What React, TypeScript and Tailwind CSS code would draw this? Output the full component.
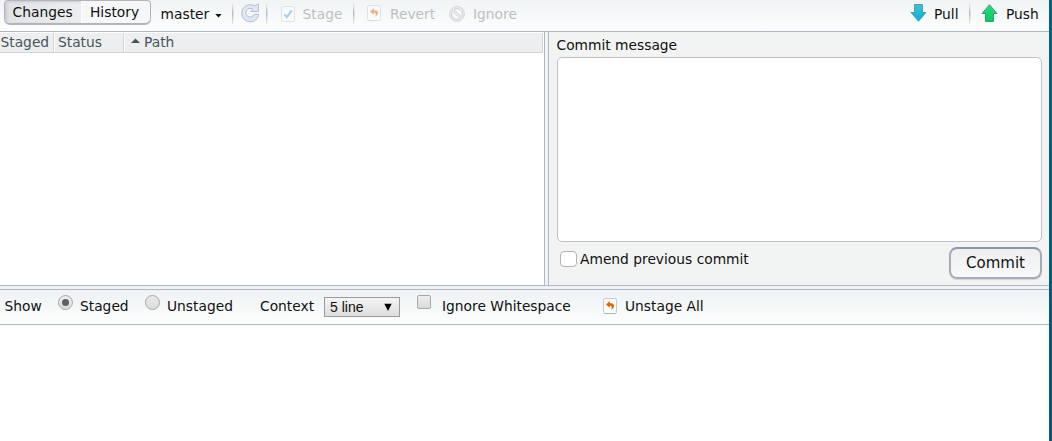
import React from "react";

function Label({ w, className = "", children }: { w: string; className?: string; children: React.ReactNode }) {
  return <span className={`block shrink-0 whitespace-nowrap ${w} ${className}`}>{children}</span>;
}

function Divider({ className = "" }: { className?: string }) {
  return (
    <span className={`flex h-[21px] w-[2px] shrink-0 ${className}`}>
      <span className="w-px bg-linear-to-b from-[#eef1f2] via-[#b5b8ba] to-[#e8eaeb]" />
      <span className="w-px bg-linear-to-b from-[#f2f4f5] via-[#dfe1e2] to-[#f6f7f7]" />
    </span>
  );
}

function RefreshIcon({ className = "" }: { className?: string }) {
  return (
    <svg width="20" height="20" viewBox="0 0 20 20" className={`shrink-0 ${className}`}>
      <path
        d="M15.1 3.1A8.6 8.6 0 1 0 18.6 12.4V11.4H14A4.3 4.3 0 1 1 12.8 6.4L10.9 8.4H18.3V1.2H16.9Z"
        fill="#dfe8f8"
        stroke="#b4bdcb"
        strokeWidth="1"
        strokeLinejoin="round"
      />
    </svg>
  );
}

function PageFrame({ children, bottom = "#a9b4be" }: { children: React.ReactNode; bottom?: string }) {
  return (
    <>
      <rect x="0.5" y="0.5" width="13" height="15" rx="1.5" fill="#fff" stroke="#c5cad2" />
      <path d="M1.5 15.5H12.5" stroke={bottom} />
      {children}
    </>
  );
}

function StageIcon({ className = "" }: { className?: string }) {
  return (
    <svg width="14" height="16" viewBox="0 0 14 16" className={`shrink-0 opacity-45 ${className}`}>
      <PageFrame bottom="#c5cad2">
        <path d="M3.3 8.4L5.9 11.2L10.5 4.4" fill="none" stroke="#4b93f0" strokeWidth="2" />
      </PageFrame>
    </svg>
  );
}

function UndoIcon({ className = "" }: { className?: string }) {
  return (
    <svg width="14" height="16" viewBox="0 0 14 16" className={`shrink-0 ${className}`}>
      <PageFrame>
        <path d="M3 6.4L6.7 3V5.2H8C10.2 5.2 11.2 6.6 11 8.3C10.8 10 9.7 11 8 11.8C8.8 10.5 9.3 8 7.8 7.7H6.7V9.8Z" fill="#df6500" />
      </PageFrame>
    </svg>
  );
}

function IgnoreIcon({ className = "" }: { className?: string }) {
  return (
    <svg width="16" height="16" viewBox="0 0 16 16" className={`shrink-0 ${className}`}>
      <circle cx="8" cy="8" r="7.4" fill="#eceef0" stroke="#d2d5d8" />
      <circle cx="8" cy="8" r="5.4" fill="#f8fafa" stroke="#cdd0d3" />
      <path d="M4.2 4.2L11.8 11.8" stroke="#cdd0d3" strokeWidth="2.8" />
      <path d="M3.8 3.8L12.2 12.2" stroke="#eceef0" strokeWidth="1.4" />
    </svg>
  );
}

function ArrowIcon({ up = false, className = "" }: { up?: boolean; className?: string }) {
  const id = up ? "push" : "pull";
  return (
    <svg width="17" height="18" viewBox="0 0 17 18" className={`shrink-0 ${className}`}>
      <defs>
        <linearGradient id={id} x1="0" y1="0" x2="0" y2="1">
          <stop offset="0" stopColor={up ? "#20e37c" : "#35c7da"} />
          <stop offset="1" stopColor={up ? "#08c965" : "#0fb0c8"} />
        </linearGradient>
      </defs>
      <path
        d={up ? "M8.5 .7L16 9.5H12.5V17.5H4.5V9.5H1Z" : "M4.5 .5H12.5V8.5H16L8.5 17.2L1 8.5H4.5Z"}
        fill={`url(#${id})`}
        stroke={up ? "#37946a" : "#3f9aab"}
        strokeWidth=".9"
        strokeLinejoin="round"
      />
    </svg>
  );
}

function Toolbar() {
  return (
    <div className="flex h-[32px] shrink-0 items-start border-b border-[#aeb7c5] bg-linear-to-b from-[#f0f4f5] to-[#fdfefe]">
      <div className="ml-[4px] flex h-[25px] w-[147px] shrink-0 overflow-hidden rounded-b-[6px] rounded-t-[4px] border border-b-2 border-[#b2b4bc] bg-[#f6f7f8] leading-[22px]">
        <div className="w-[77px] border-r border-[#fdfdfd] bg-linear-to-r from-[#e1e3e6] to-[#eceef0] pl-[7.6px] shadow-[inset_2px_1px_3px_#c8cad0]">Changes</div>
        <div className="pl-[8px]">History</div>
      </div>
      <Label w="w-[55px]" className="ml-[9px] mt-[4px] pl-[0.6px] leading-[20px]">master</Label>
      <svg width="7" height="4" viewBox="0 0 7 4" className="mt-[14px] shrink-0"><path d="M.3 0H6.7L3.5 3.6Z" fill="#111" /></svg>
      <Divider className="ml-[10px] mt-[3px]" />
      <RefreshIcon className="ml-[6px] mt-[3px]" />
      <Divider className="ml-[6px] mt-[3px]" />
      <StageIcon className="ml-[13px] mt-[6px]" />
      <Label w="w-[50px]" className="ml-[7px] mt-[4px] pl-[0.6px] leading-[20px] text-[#bcbfc1]">Stage</Label>
      <Divider className="ml-[1px] mt-[3px]" />
      <UndoIcon className="ml-[12px] mt-[5px] opacity-45" />
      <Label w="w-[59px]" className="ml-[9px] mt-[4px] leading-[20px] text-[#bcbfc1]">Revert</Label>
      <IgnoreIcon className="mt-[6px]" />
      <Label w="w-[50px]" className="ml-[8px] mt-[4px] leading-[20px] text-[#bcbfc1]">Ignore</Label>
      <div className="grow" />
      <ArrowIcon className="mt-[4px]" />
      <Label w="w-[35px]" className="ml-[7px] mt-[4px] leading-[20px]">Pull</Label>
      <Divider className="mt-[3px]" />
      <ArrowIcon up className="ml-[10px] mt-[4px]" />
      <Label w="w-[43px]" className="ml-[8px] mt-[4px] leading-[20px]">Push</Label>
    </div>
  );
}

function FileTable() {
  return (
    <div className="w-[544px] shrink-0 bg-white pt-px">
      <div className="flex h-[20px] w-[543px] border-b border-r border-[#cfd3d7] bg-[#edeef0] leading-[18px] text-[#46545d]">
        <Label w="w-[54px]" className="border-r border-[#d3d6d9] pl-[0.5px]">Staged</Label>
        <Label w="w-[70px]" className="border-l border-r border-l-white border-r-[#d3d6d9] pl-[3px]">Status</Label>
        <div className="flex border-l border-white pl-[6px]">
          <svg width="9" height="5" viewBox="0 0 9 5" className="mt-[5px]"><path d="M0 5H9L4.5 .5Z" fill="#46545d" /></svg>
          <span className="ml-[4px]">Path</span>
        </div>
      </div>
    </div>
  );
}

function CommitPanel() {
  return (
    <div className="flex grow flex-col bg-[#f2f4f4] pl-[8px] pr-[7px]">
      <div className="-ml-[0.5px] h-[25px] leading-[26px]">Commit message</div>
      <textarea aria-label="Commit message" className="block h-[185px] w-full resize-none rounded-[5px] border border-[#bfc2c4] bg-white outline-none" />
      <div className="flex">
        <span className="ml-[3px] mt-[9px] h-[16px] w-[17px] shrink-0 rounded-[4px] border border-[#b2b4b8] bg-white" />
        <span className="ml-[3px] mt-[7px] leading-[20px]">Amend previous commit</span>
        <div className="grow" />
        <button className="mt-[5px] h-[32px] w-[93px] rounded-[8px] border-2 border-[#a9abb8] border-t-[#8d96a9] bg-linear-to-b from-[#eeeff2] to-[#f8f8f8] text-[15px] leading-[28px] shadow-[0_1px_1px_#d2d3d7]">Commit</button>
      </div>
    </div>
  );
}

function DiffToolbar() {
  return (
    <div className="flex h-[35px] shrink-0 items-start border-b border-[#aeb7c5] bg-linear-to-b from-[#edf2f4] to-[#fdfefe] leading-[20px]">
      <Label w="w-[54px]" className="mt-[6px] pl-[4.5px]">Show</Label>
      <span className="ml-[4px] mt-[5px] flex size-[15px] shrink-0 items-center justify-center rounded-full border border-[#a7a7a7] bg-linear-to-b from-[#eeeeee] to-[#dcdcdc]">
        <span className="size-[7px] rounded-full bg-[#606060]" />
      </span>
      <Label w="w-[65px]" className="ml-[7px] mt-[6px]">Staged</Label>
      <span className="mt-[5px] size-[15px] shrink-0 rounded-full border border-[#a7a7a7] bg-linear-to-b from-[#e9e9e9] to-[#dcdcdc]" />
      <Label w="w-[93px]" className="ml-[7px] mt-[6px]">Unstaged</Label>
      <Label w="w-[64px]" className="mt-[6px]">Context</Label>
      <div className="mt-[7px] flex h-[20px] w-[76px] shrink-0 items-center justify-between border border-[#999b9d] bg-linear-to-b from-[#f4f4f4] to-[#dedede] pl-[5px] pr-[7px] font-['Liberation_Sans',sans-serif] text-[14px]">
        <span>5 line</span>
        <svg width="8" height="8" viewBox="0 0 8 8"><path d="M.3 .7H7.7L4 8Z" fill="#000" /></svg>
      </div>
      <span className="ml-[17px] mt-[5px] size-[14px] shrink-0 rounded-[2px] border border-[#a8a9aa] bg-linear-to-b from-[#ededed] to-[#dcdcdc]" />
      <Label w="w-[161px]" className="ml-[11px] mt-[6px]">Ignore Whitespace</Label>
      <UndoIcon className="mt-[8px]" />
      <Label w="w-[90px]" className="ml-[8px] mt-[6px]">Unstage All</Label>
    </div>
  );
}

export default function App() {
  return (
    <div className="flex h-[441px] w-[1052px] overflow-hidden bg-white font-['DejaVu_Sans',sans-serif] text-[13.8px] text-[#111]">
      <div className="flex w-[1049px] flex-col">
        <Toolbar />
        <div className="flex h-[253px] shrink-0">
          <FileTable />
          <div className="w-[5px] shrink-0 border-x border-[#b0b8c4] bg-[#f1f4f6]" />
          <CommitPanel />
        </div>
        <div className="h-[5px] shrink-0 border-y border-[#b0b8c4] bg-[#eff3f5]" />
        <DiffToolbar />
        <div className="grow bg-white" />
      </div>
      <div className="w-[3px] bg-linear-to-b from-[#05617f] to-[#05587a]" />
    </div>
  );
}
